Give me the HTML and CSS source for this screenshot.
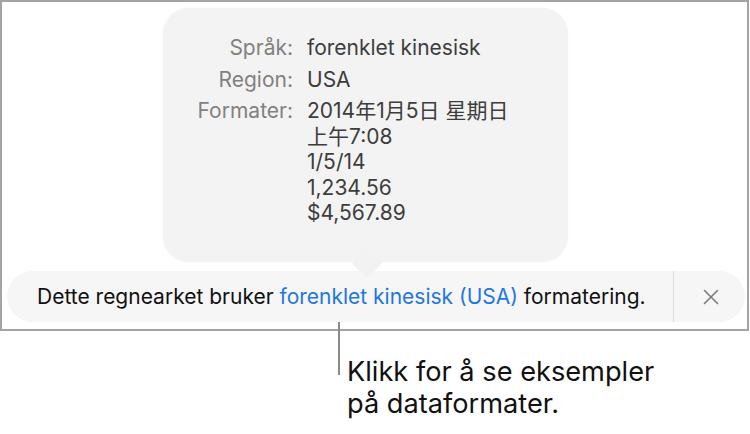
FILE: index.html
```html
<!DOCTYPE html>
<html lang="nb">
<head>
<meta charset="utf-8">
<title>Formatering</title>
<link rel="stylesheet" href="styles.css">
</head>
<body>
  <div class="frame">
    <div class="popover">
      <div class="info">
        <div class="label">Språk:</div>
        <div class="value">forenklet kinesisk</div>
        <div class="label">Region:</div>
        <div class="value">USA</div>
        <div class="label">Formater:</div>
        <div class="value">
          <div>2014年1月5日 星期日</div>
          <div>上午7:08</div>
          <div>1/5/14</div>
          <div>1,234.56</div>
          <div>$4,567.89</div>
        </div>
      </div>
    </div>
    <div class="bar">
      <p class="message">Dette regnearket bruker <a class="link" href="#">forenklet kinesisk (USA)</a> formatering.</p>
      <button class="close" type="button" aria-label="Lukk">
        <svg width="16" height="16" viewBox="0 0 16 16"><path d="M1.5 1.5 L14.5 14.5 M14.5 1.5 L1.5 14.5" stroke="#7b7b7b" stroke-width="1.6" fill="none" stroke-linecap="round"/></svg>
      </button>
    </div>
  </div>
  <div class="callout">
    <p>Klikk for å se eksempler<br>på dataformater.</p>
  </div>
</body>
</html>
```
FILE: styles.css
```css
* { box-sizing: border-box; }

body {
  margin: 0;
  background: #fff;
  font-family: Inter, "Noto Sans CJK SC", sans-serif;
}

.frame {
  width: 749px;
  height: 331px;
  border: 2px solid #a4a4a4;
  display: flex;
  flex-direction: column;
}

.popover {
  position: relative;
  z-index: 1;
  margin: 6px 0 0 161px;
  width: 405px;
  height: 254px;
  background: #f3f3f3;
  border-radius: 26px;
  box-shadow: 0 0 2px rgba(0, 0, 0, 0.06);
  padding-top: 27px;
}

/* pointer joining the popover to the bar */
.popover::after {
  content: "";
  position: absolute;
  left: 193px;
  top: 244px;
  width: 22px;
  height: 22px;
  background: #f2f2f2;
  transform: rotate(45deg);
  border-radius: 3px;
}

.info {
  display: grid;
  grid-template-columns: 130px auto;
  column-gap: 14px;
  row-gap: 6px;
  font-size: 21px;
  line-height: 25.5px;
}

.label {
  text-align: right;
  color: #818181;
}

.value {
  color: #3d3d3d;
}

.bar {
  margin: 9px 0 0 5px;
  width: 738px;
  height: 51px;
  background: #f6f6f6;
  border-radius: 26px;
  display: flex;
  align-items: stretch;
}

.message {
  margin: 0;
  flex: 1;
  display: flex;
  align-items: center;
  padding-left: 30px;
  font-size: 21px;
  color: #111;
  white-space: pre;
}

.link {
  color: #1f77e0;
  text-decoration: none;
}

.close {
  width: 72px;
  border: 0;
  border-left: 1px solid #dcdcdc;
  background: transparent;
  display: flex;
  align-items: center;
  justify-content: center;
  padding: 0 0 0 2px;
}

.callout {
  position: relative;
  margin-left: 347px;
  padding-top: 25px;
}

/* leader line up to the bar */
.callout::before {
  content: "";
  position: absolute;
  left: -9px;
  top: -9px;
  width: 2px;
  height: 53px;
  background: #8a8a8a;
}

.callout p {
  margin: 0;
  font-size: 27.2px;
  line-height: 32px;
  color: #111;
}
```
